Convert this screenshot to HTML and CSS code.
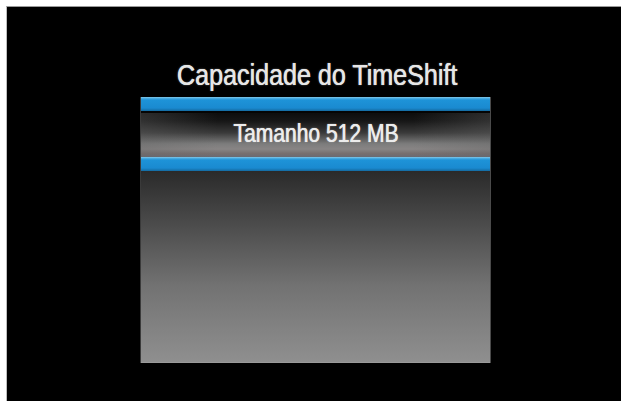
FILE: index.html
```html
<!DOCTYPE html>
<html lang="pt">
<head>
<meta charset="utf-8">
<title>Capacidade do TimeShift</title>
<link rel="stylesheet" href="styles.css">
</head>
<body>
<div class="screen">
  <div class="menu">
    <h1 class="title"><span class="narrow">Capacidade do TimeShift</span></h1>
    <div class="panel">
      <div class="bar"></div>
      <div class="gap"></div>
      <div class="row"><span class="narrow">Tamanho 512 MB</span></div>
      <div class="bar"></div>
      <div class="fill"></div>
    </div>
  </div>
</div>
</body>
</html>
```

FILE: styles.css
```css
html, body {
  margin: 0;
  padding: 0;
  background: #ffffff;
  height: 100%;
}
body {
  padding: 6px 0 0 6px;
  box-sizing: border-box;
  overflow: hidden;
}
.screen {
  background: #000000;
  height: 100%;
  border-top: 1px solid #9a9a9a;
  border-left: 1px solid #bdbdbd;
  box-sizing: border-box;
  display: flex;
  flex-direction: column;
}
.menu {
  width: 351px;
  margin-left: 133px;
  display: flex;
  flex-direction: column;
}
.narrow {
  display: inline-block;
  white-space: nowrap;
  transform-origin: center center;
}
.title {
  margin: 0;
  height: 90px;
  display: flex;
  align-items: flex-end;
  justify-content: center;
  padding-left: 4px;
  padding-bottom: 7px;
  box-sizing: border-box;
  font-family: "Liberation Sans", Arial, sans-serif;
  font-weight: normal;
  font-size: 29px;
  line-height: 30px;
  color: #e6e6e6;
  text-shadow: 0.4px 0 0 #e6e6e6, 0 0 2px rgba(255,255,255,0.45);
}
.title .narrow {
  transform: scaleX(0.865);
}
.panel {
  display: flex;
  flex-direction: column;
  height: 266px;
  border-left: 1px solid #3a3a3a;
  border-right: 1px solid #4a4a4a;
}
.bar {
  height: 14px;
  background: linear-gradient(to bottom, #8ccbe9 0px, #52b0e2 1px, #1e93d8 3px, #1a8ad0 11px, #146aa0 14px);
}
.gap {
  height: 2px;
  background: #050505;
}
.row {
  height: 44px;
  display: flex;
  align-items: center;
  justify-content: center;
  padding-bottom: 4px;
  box-sizing: border-box;
  font-family: "Liberation Sans", Arial, sans-serif;
  font-size: 26px;
  line-height: 28px;
  color: #ececec;
  text-shadow: 0.4px 0 0 #ececec, 0 0 2px rgba(255,255,255,0.45);
  background:
    linear-gradient(to right, rgba(100,100,100,0.35) 0%, rgba(0,0,0,0) 22%, rgba(0,0,0,0) 78%, rgba(100,100,100,0.35) 100%),
    linear-gradient(to bottom, #0d0d0d 0%, #161616 18%, #3a3a3a 45%, #7c7c7c 70%, #888585 82%, #776f6f 92%, #6a6a72 100%);
}
.row .narrow {
  transform: scaleX(0.81);
}
.fill {
  flex: 1;
  background: linear-gradient(to bottom, #2a2a2a 0%, #4e4e4e 30%, #727272 60%, #8f8f8f 100%);
  border-bottom: 1px solid #9a9a9a;
}
```
